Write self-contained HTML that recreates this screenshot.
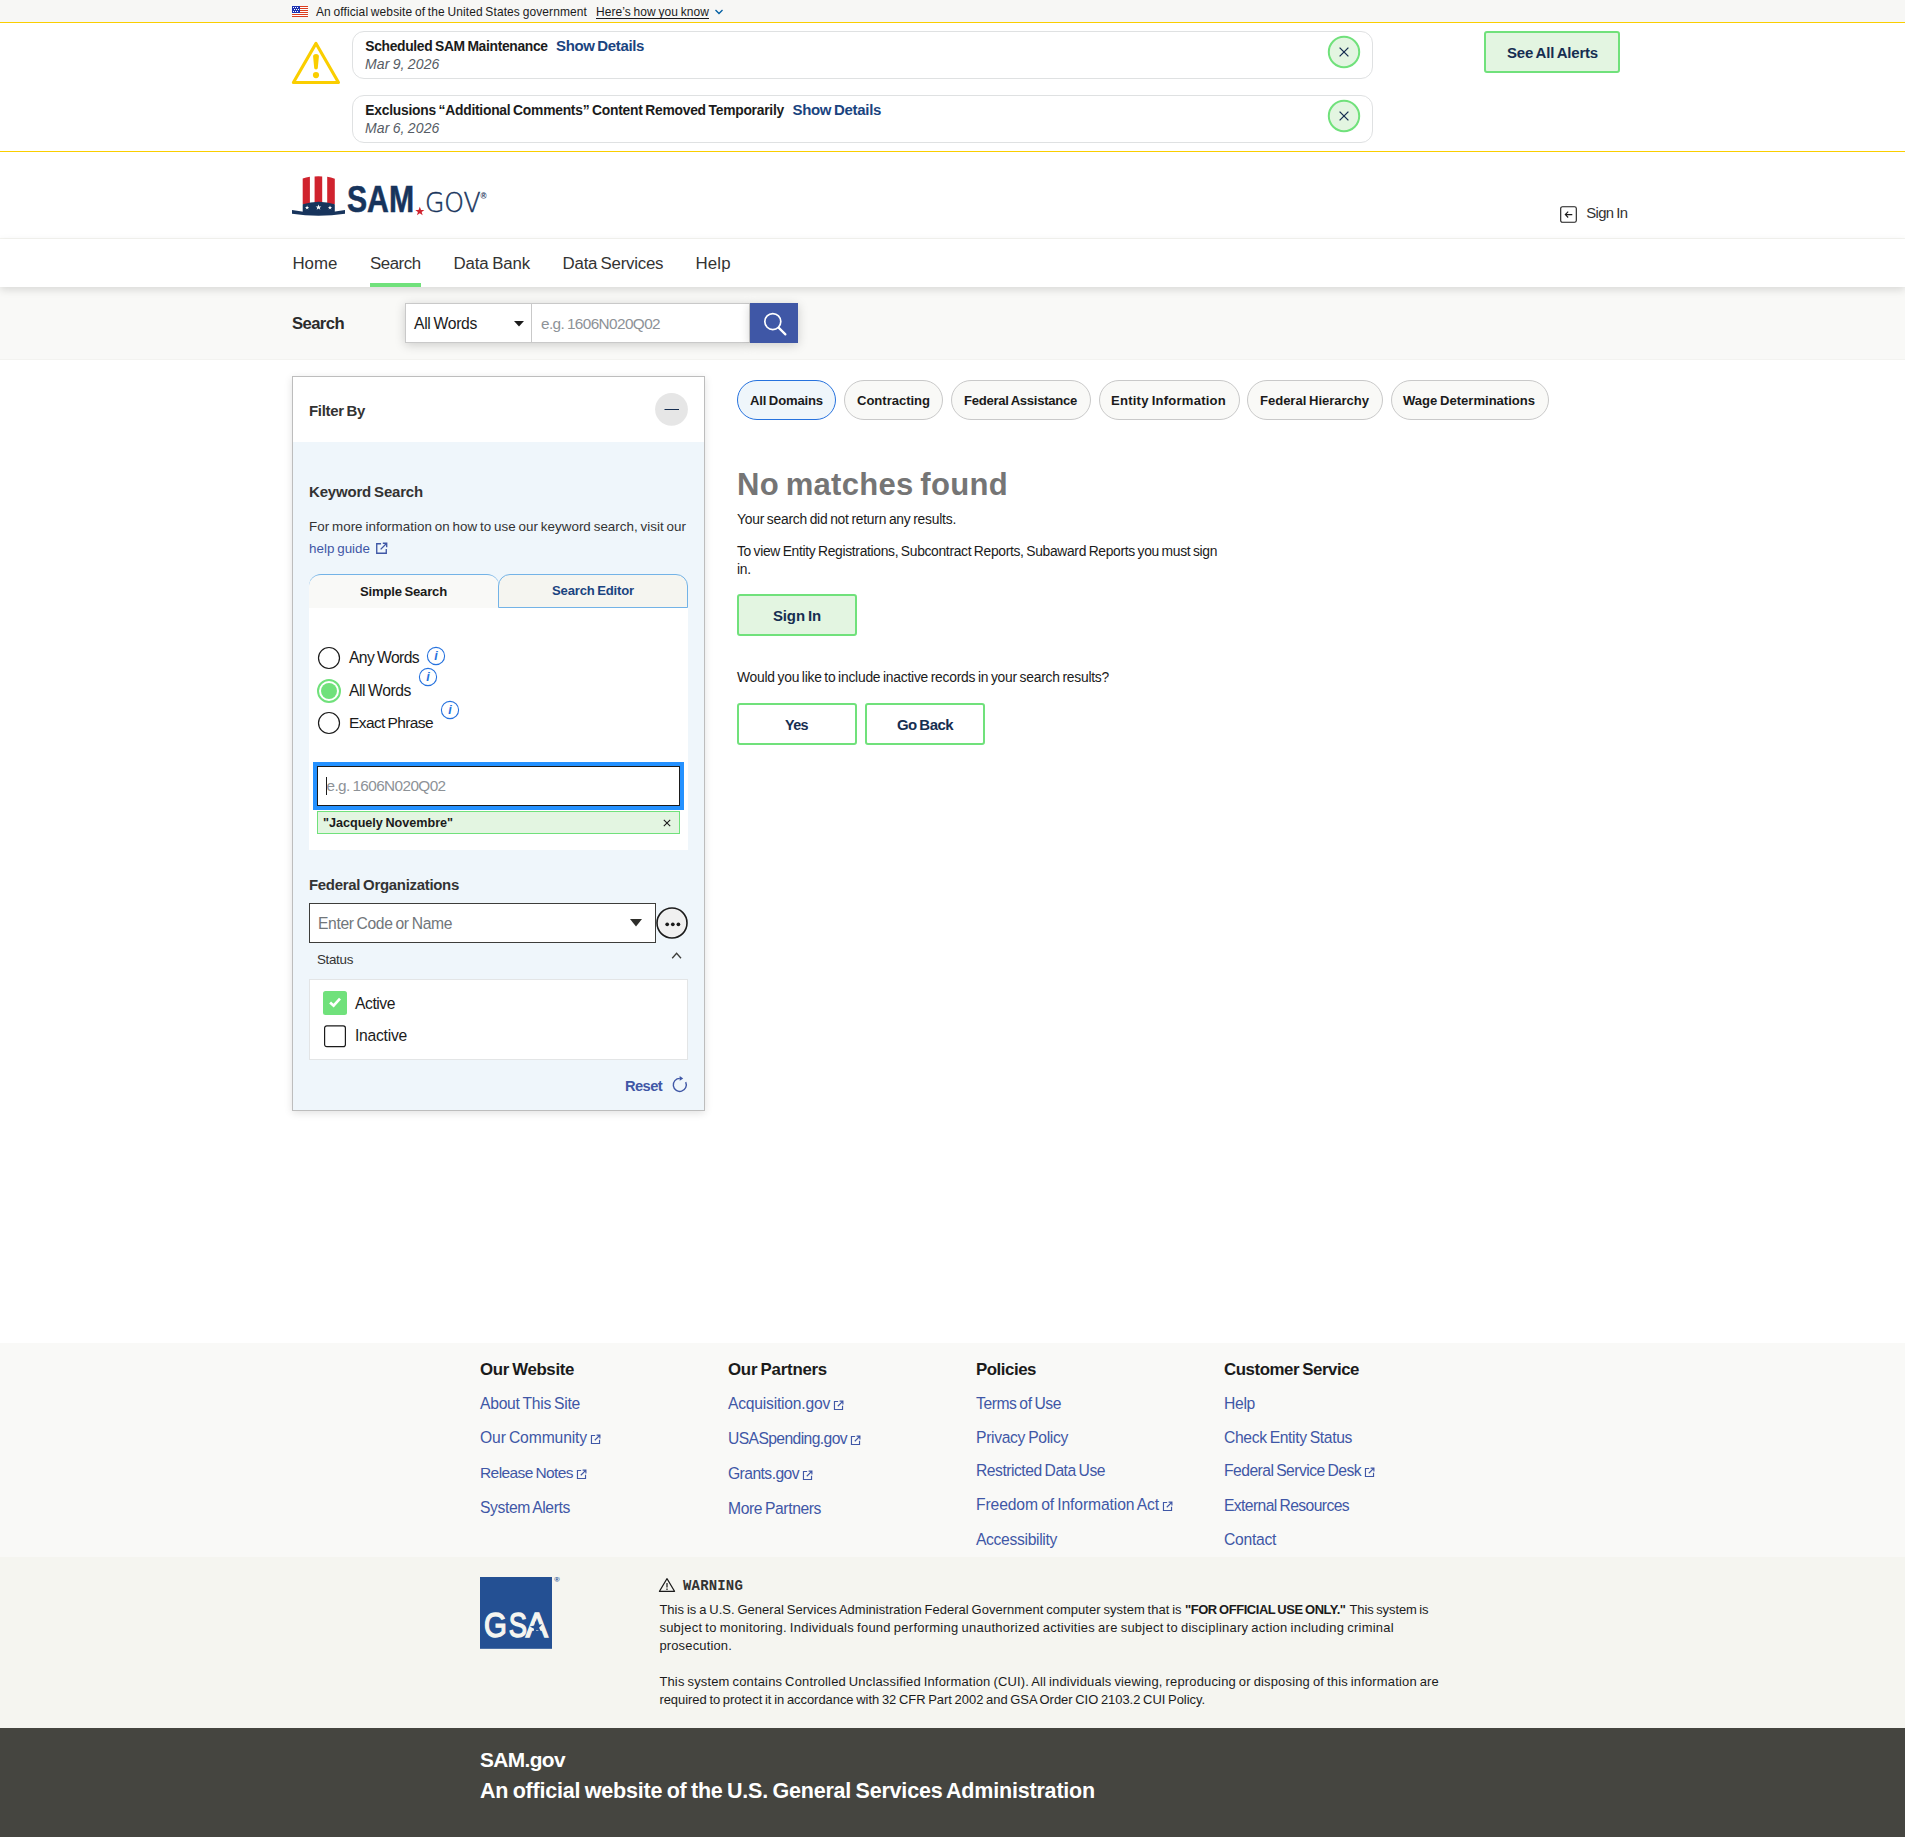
<!DOCTYPE html>
<html lang="en"><head><meta charset="utf-8"><title>SAM.gov | Search</title>
<style>
html,body{margin:0;padding:0;background:#fff;}
body{width:1905px;height:1837px;position:relative;overflow:hidden;font-family:"Liberation Sans",Arial,sans-serif;color:#1b1b1b;}
.b{position:absolute;display:block;}
.t{position:absolute;display:block;white-space:nowrap;line-height:20px;}
</style></head><body>
<div class="b" style="left:0px;top:0px;width:1905px;height:22px;background:#f7f7f5;"></div>
<svg class="b" style="left:292px;top:6px" width="16" height="11" viewBox="0 0 16 11"><rect width="16" height="11" fill="#fff"/><g fill="#db3e1f"><rect y="0" width="16" height="1"/><rect y="2" width="16" height="1"/><rect y="4" width="16" height="1"/><rect y="6" width="16" height="1"/><rect y="8" width="16" height="1"/><rect y="10" width="16" height="1"/></g><rect width="8" height="7" fill="#1e33b1"/><g fill="#fff"><rect x="1" y="1" width="1" height="1"/><rect x="3" y="1" width="1" height="1"/><rect x="5" y="1" width="1" height="1"/><rect x="2" y="3" width="1" height="1"/><rect x="4" y="3" width="1" height="1"/><rect x="6" y="3" width="1" height="1"/><rect x="1" y="5" width="1" height="1"/><rect x="3" y="5" width="1" height="1"/><rect x="5" y="5" width="1" height="1"/></g></svg>
<span class="t" id="t1" style="left:316px;top:2.01px;font-size:11.98px;letter-spacing:0.114px;word-spacing:-0.77px;">An official website of the United States government</span>
<span class="t" id="t2" style="left:596px;top:2.01px;font-size:11.98px;letter-spacing:0.093px;word-spacing:-0.77px;text-decoration:underline;text-underline-offset:1.5px;">Here’s how you know</span>
<svg class="b" style="left:714px;top:8px" width="10" height="8" viewBox="0 0 10 8"><path d="M1.5 2 L5 5.5 L8.5 2" fill="none" stroke="#005ea2" stroke-width="1.3"/></svg>
<div class="b" style="left:0px;top:22px;width:1905px;height:130px;background:#fff;"></div>
<div class="b" style="left:0px;top:21.8px;width:1905px;height:1.2px;background:#face00;"></div>
<div class="b" style="left:0px;top:151px;width:1905px;height:1.2px;background:#face00;"></div>
<svg class="b" style="left:291px;top:40px" width="50" height="46" viewBox="0 0 50 46"><path d="M25 3.4 L47.5 42.5 L2.4 42.5 Z" fill="none" stroke="#face00" stroke-width="3.1" stroke-linejoin="round"/><path d="M22.1 16.6 Q22 14.1 25 14.1 Q28 14.1 27.9 16.6 L26.8 28 Q26.7 29.4 25 29.4 Q23.3 29.4 23.2 28 Z" fill="#face00"/><circle cx="25" cy="35.1" r="3.1" fill="#face00"/></svg>
<div class="b" style="left:352px;top:31px;width:1021px;height:48px;border:1px solid #dfe1e2;border-radius:12px;box-sizing:border-box;background:#fff;"></div>
<span class="t" id="t3" style="left:365.3px;top:36.01px;font-size:13.85px;font-weight:700;letter-spacing:-0.326px;word-spacing:-0.89px;">Scheduled SAM Maintenance</span>
<span class="t" id="t4" style="left:556px;top:36.01px;font-size:14.98px;font-weight:700;color:#1a4480;letter-spacing:-0.351px;word-spacing:-0.96px;">Show Details</span>
<span class="t" id="t5" style="left:365px;top:53.60px;font-size:14.04px;color:#565c65;font-style:italic;letter-spacing:0.129px;word-spacing:-0.90px;">Mar 9, 2026</span>
<svg class="b" style="left:1327px;top:35px" width="34" height="34" viewBox="0 0 34 34"><circle cx="17" cy="17" r="15.2" fill="#e3f5e1" stroke="#70e17b" stroke-width="2"/><path d="M12.6 12.6 L21.4 21.4 M21.4 12.6 L12.6 21.4" stroke="#162e51" stroke-width="1.3"/></svg>
<div class="b" style="left:352px;top:95px;width:1021px;height:48px;border:1px solid #dfe1e2;border-radius:12px;box-sizing:border-box;background:#fff;"></div>
<span class="t" id="t6" style="left:365.3px;top:100.01px;font-size:13.85px;font-weight:700;letter-spacing:-0.251px;word-spacing:-0.89px;">Exclusions “Additional Comments” Content Removed Temporarily</span>
<span class="t" id="t7" style="left:792.5px;top:100.01px;font-size:14.98px;font-weight:700;color:#1a4480;letter-spacing:-0.309px;word-spacing:-0.96px;">Show Details</span>
<span class="t" id="t8" style="left:365px;top:117.60px;font-size:14.04px;color:#565c65;font-style:italic;letter-spacing:0.129px;word-spacing:-0.90px;">Mar 6, 2026</span>
<svg class="b" style="left:1327px;top:99px" width="34" height="34" viewBox="0 0 34 34"><circle cx="17" cy="17" r="15.2" fill="#e3f5e1" stroke="#70e17b" stroke-width="2"/><path d="M12.6 12.6 L21.4 21.4 M21.4 12.6 L12.6 21.4" stroke="#162e51" stroke-width="1.3"/></svg>
<div class="b" style="left:1484px;top:31px;width:136px;height:42px;border:2px solid #70e17b;background:#e3f5e1;border-radius:3px;box-sizing:border-box;"></div>
<span class="t" id="t9" style="left:1507px;top:43.01px;font-size:14.98px;font-weight:700;color:#162e51;letter-spacing:-0.177px;word-spacing:-0.96px;">See All Alerts</span>
<div class="b" style="left:0px;top:152px;width:1905px;height:85px;background:#fff;"></div>
<div class="b" style="left:0px;top:238px;width:1905px;height:1px;background:#f5f5f1;"></div>
<svg class="b" style="left:290px;top:170.7px" width="204" height="50" viewBox="0 0 204 50">
<g fill="#d0232e"><path d="M12.7 7.6 Q16 6.3 19.9 5.8 L19.9 33 L12.7 33 Z"/><path d="M24.6 5.4 Q28.4 5.1 32.2 5.4 L32.2 33 L24.6 33 Z"/><path d="M37.2 5.8 Q41 6.3 44.8 7.8 L44.8 33 L37.2 33 Z"/></g>
<path d="M12.7 33.2 Q28.7 28.2 44.8 33.2 L44.8 42 L12.7 42 Z" fill="#17345c"/>
<path d="M2 39 Q28.5 44.2 55 39 L55 42.8 Q28.5 46.8 2 42.8 Z" fill="#17345c"/>
<g fill="#fff"><path d="M0 -2.3 L0.62 -0.72 L2.3 -0.72 L0.95 0.3 L1.45 1.95 L0 0.95 L-1.45 1.95 L-0.95 0.3 L-2.3 -0.72 L-0.62 -0.72 Z" transform="translate(17.1 36.6) scale(0.92)"/><path d="M0 -2.3 L0.62 -0.72 L2.3 -0.72 L0.95 0.3 L1.45 1.95 L0 0.95 L-1.45 1.95 L-0.95 0.3 L-2.3 -0.72 L-0.62 -0.72 Z" transform="translate(28.5 36.3) scale(1.25)"/><path d="M0 -2.3 L0.62 -0.72 L2.3 -0.72 L0.95 0.3 L1.45 1.95 L0 0.95 L-1.45 1.95 L-0.95 0.3 L-2.3 -0.72 L-0.62 -0.72 Z" transform="translate(40 36.6) scale(0.92)"/></g>
<text x="57" y="41" font-family="'Liberation Sans',sans-serif" font-weight="700" font-size="37.3" fill="#17345c" stroke="#17345c" stroke-width="0.6" textLength="67" lengthAdjust="spacingAndGlyphs">SAM</text>
<path d="M0 -3.9 L1.05 -1.2 L3.9 -1.2 L1.6 0.5 L2.45 3.3 L0 1.6 L-2.45 3.3 L-1.6 0.5 L-3.9 -1.2 L-1.05 -1.2 Z" transform="translate(129.8 40.4) scale(1.17)" fill="#d0232e"/>
<text x="134.9" y="41.2" font-family="'DejaVu Sans Light','DejaVu Sans',sans-serif" font-weight="200" font-size="27" fill="#17345c" stroke="#17345c" stroke-width="0.5" textLength="55.8" lengthAdjust="spacingAndGlyphs">GOV</text>
<text x="190.6" y="28.1" font-family="'Liberation Sans',sans-serif" font-weight="700" font-size="8.2" fill="#17345c">®</text>
</svg>
<svg class="b" style="left:1559px;top:205px" width="20" height="20" viewBox="0 0 20 20"><rect x="1.7" y="1.7" width="15.6" height="15.6" rx="1.8" fill="none" stroke="#1b1b1b" stroke-width="1.1"/><path d="M13.3 9.6 H6.3 M9.2 6.7 L6.3 9.6 L9.2 12.5" fill="none" stroke="#1b1b1b" stroke-width="1.1"/></svg>
<span class="t" id="t10" style="left:1586.2px;top:203.01px;font-size:14.86px;color:#333;letter-spacing:-0.627px;word-spacing:-0.78px;">Sign In</span>
<div class="b" style="left:0px;top:239px;width:1905px;height:48px;background:#fff;box-shadow:0 3px 8px rgba(0,0,0,.13);z-index:2;"></div>
<span class="t" id="t11" style="left:292.4px;top:254.00px;font-size:16.85px;color:#333;letter-spacing:0.016px;z-index:3;">Home</span>
<span class="t" id="t12" style="left:370px;top:254.00px;font-size:16.85px;color:#333;letter-spacing:-0.464px;z-index:3;">Search</span>
<span class="t" id="t13" style="left:453.4px;top:254.00px;font-size:16.85px;color:#333;letter-spacing:-0.086px;word-spacing:-1.08px;z-index:3;">Data Bank</span>
<span class="t" id="t14" style="left:562.6px;top:254.00px;font-size:16.85px;color:#333;letter-spacing:-0.245px;word-spacing:-1.08px;z-index:3;">Data Services</span>
<span class="t" id="t15" style="left:695.6px;top:254.00px;font-size:16.85px;color:#333;letter-spacing:0.086px;z-index:3;">Help</span>
<div class="b" style="left:370px;top:283px;width:51px;height:4px;background:#70e17b;z-index:3;"></div>
<div class="b" style="left:0px;top:287px;width:1905px;height:73px;background:#f9f9f7;border-bottom:1px solid #f3f3f0;box-sizing:border-box;"></div>
<span class="t" id="t16" style="left:292px;top:314.01px;font-size:16.67px;font-weight:700;color:#2b2b2b;letter-spacing:-0.594px;">Search</span>
<div class="b" style="left:405px;top:303px;width:345px;height:40px;background:#fff;border:1px solid #c9c9c9;box-sizing:border-box;box-shadow:0 2px 10px rgba(0,0,0,.18);"></div>
<div class="b" style="left:530.5px;top:303px;width:1px;height:40px;background:#c9c9c9;"></div>
<span class="t" id="t17" style="left:414px;top:313.51px;font-size:15.68px;letter-spacing:-0.307px;word-spacing:-1.01px;">All Words</span>
<svg class="b" style="left:513px;top:320px" width="12" height="8" viewBox="0 0 12 8"><path d="M1 1 H11 L6 6.6 Z" fill="#1b1b1b"/></svg>
<span class="t" id="t18" style="left:541px;top:313.51px;font-size:15.34px;color:#8d9297;letter-spacing:-0.602px;word-spacing:-0.91px;">e.g. 1606N020Q02</span>
<div class="b" style="left:750px;top:302.5px;width:48px;height:40.5px;background:#3f57a6;box-shadow:0 2px 10px rgba(0,0,0,.18);"></div>
<svg class="b" style="left:762px;top:311px" width="26" height="26" viewBox="0 0 26 26"><circle cx="10.8" cy="10.6" r="8" fill="none" stroke="#fff" stroke-width="1.7"/><path d="M16.6 16.6 L23.4 23.4" stroke="#fff" stroke-width="2.2" stroke-linecap="round"/></svg>
<div class="b" style="left:292px;top:376px;width:413px;height:734.5px;background:#eff6fb;border:1px solid #bdbdbd;box-sizing:border-box;box-shadow:0 2px 8px rgba(0,0,0,.12);"></div>
<div class="b" style="left:293px;top:377px;width:411px;height:65px;background:#fff;"></div>
<span class="t" id="t19" style="left:309px;top:401.01px;font-size:14.98px;font-weight:700;color:#333;letter-spacing:-0.326px;word-spacing:-0.96px;">Filter By</span>
<svg class="b" style="left:654px;top:392px" width="36" height="36" viewBox="0 0 36 36"><circle cx="17.5" cy="17.3" r="16.4" fill="#e6e6e6"/><path d="M10.5 17.5 H25" stroke="#162e51" stroke-width="1"/></svg>
<span class="t" id="t20" style="left:309px;top:482.01px;font-size:14.98px;font-weight:700;color:#333;letter-spacing:-0.168px;word-spacing:-0.96px;">Keyword Search</span>
<span class="t" id="t21" style="left:309px;top:517.00px;font-size:13.38px;color:#333;letter-spacing:0.022px;word-spacing:-0.86px;">For more information on how to use our keyword search, visit our</span>
<span class="t" id="t22" style="left:309px;top:539.00px;font-size:13.38px;color:#3f57a6;letter-spacing:0.013px;word-spacing:-0.86px;">help guide</span>
<svg class="b" style="left:375px;top:542px" width="13" height="13" viewBox="0 0 12 12"><path d="M5.6 1.6 H1.6 V10.4 H10.4 V6.4" fill="none" stroke="#3f57a6" stroke-width="1.25"/><path d="M7.2 1.2 H10.8 V4.8 M10.6 1.4 L5.2 6.8" fill="none" stroke="#3f57a6" stroke-width="1.25"/></svg>
<div class="b" style="left:309px;top:607px;width:379px;height:243px;background:#fff;"></div>
<div class="b" style="left:309px;top:574px;width:190px;height:34px;background:#f9f9f7;border-top:1px solid #73b3e7;border-radius:12px 12px 0 0;box-sizing:border-box;"></div>
<div class="b" style="left:309px;top:600px;width:189px;height:8px;background:#f9f9f7;"></div>
<div class="b" style="left:498px;top:574px;width:190px;height:33.5px;background:#f5f5f0;border:1px solid #73b3e7;border-radius:12px 12px 0 0;box-sizing:border-box;"></div>
<span class="t" id="t23" style="left:360px;top:582.01px;font-size:13.1px;font-weight:700;letter-spacing:-0.185px;word-spacing:-0.84px;">Simple Search</span>
<span class="t" id="t24" style="left:552px;top:581.01px;font-size:13.1px;font-weight:700;color:#1a4480;letter-spacing:-0.177px;word-spacing:-0.84px;">Search Editor</span>
<svg class="b" style="left:316px;top:644.5px" width="26" height="26" viewBox="0 0 26 26"><circle cx="13" cy="13" r="10.5" fill="#fff" stroke="#1b1b1b" stroke-width="1.2"/></svg>
<span class="t" id="t25" style="left:349px;top:648.01px;font-size:15.68px;letter-spacing:-0.595px;word-spacing:-1.01px;">Any Words</span>
<svg class="b" style="left:426px;top:646px" width="20" height="20" viewBox="0 0 20 20"><circle cx="10" cy="10" r="8.6" fill="#fff" stroke="#2672de" stroke-width="1.1"/><text x="10" y="14.2" text-anchor="middle" font-family="'Liberation Sans',sans-serif" font-style="italic" font-weight="700" font-size="12.5" fill="#2672de">i</text></svg>
<svg class="b" style="left:316px;top:677.5px" width="26" height="26" viewBox="0 0 26 26"><circle cx="13" cy="13" r="11" fill="#fff" stroke="#70e17b" stroke-width="2"/><circle cx="13" cy="13" r="8" fill="#70e17b"/></svg>
<span class="t" id="t26" style="left:349px;top:681.01px;font-size:15.68px;letter-spacing:-0.418px;word-spacing:-1.01px;">All Words</span>
<svg class="b" style="left:418px;top:667px" width="20" height="20" viewBox="0 0 20 20"><circle cx="10" cy="10" r="8.6" fill="#fff" stroke="#2672de" stroke-width="1.1"/><text x="10" y="14.2" text-anchor="middle" font-family="'Liberation Sans',sans-serif" font-style="italic" font-weight="700" font-size="12.5" fill="#2672de">i</text></svg>
<svg class="b" style="left:316px;top:709.9px" width="26" height="26" viewBox="0 0 26 26"><circle cx="13" cy="13" r="10.5" fill="#fff" stroke="#1b1b1b" stroke-width="1.2"/></svg>
<span class="t" id="t27" style="left:349px;top:713.01px;font-size:15.51px;letter-spacing:-0.602px;word-spacing:-0.96px;">Exact Phrase</span>
<svg class="b" style="left:440px;top:700px" width="20" height="20" viewBox="0 0 20 20"><circle cx="10" cy="10" r="8.6" fill="#fff" stroke="#2672de" stroke-width="1.1"/><text x="10" y="14.2" text-anchor="middle" font-family="'Liberation Sans',sans-serif" font-style="italic" font-weight="700" font-size="12.5" fill="#2672de">i</text></svg>
<div class="b" style="left:313px;top:762px;width:371px;height:48px;background:#2491ff;"></div>
<div class="b" style="left:317px;top:766px;width:363px;height:40px;background:#fff;border:1px solid #1b1b1b;box-sizing:border-box;"></div>
<div class="b" style="left:326px;top:777px;width:1px;height:18px;background:#1b1b1b;"></div>
<span class="t" id="t28" style="left:326.5px;top:776.01px;font-size:15.34px;color:#8d9297;letter-spacing:-0.602px;word-spacing:-0.91px;">e.g. 1606N020Q02</span>
<div class="b" style="left:317px;top:811px;width:363px;height:23px;background:#e3f5e1;border:1px solid #70e17b;box-sizing:border-box;"></div>
<span class="t" id="t29" style="left:323px;top:813.01px;font-size:12.64px;font-weight:700;letter-spacing:-0.024px;word-spacing:-0.81px;">"Jacquely Novembre"</span>
<svg class="b" style="left:662px;top:818px" width="10" height="10" viewBox="0 0 10 10"><path d="M1.8 1.8 L8.2 8.2 M8.2 1.8 L1.8 8.2" stroke="#1b1b1b" stroke-width="1.1"/></svg>
<span class="t" id="t30" style="left:309px;top:874.51px;font-size:14.98px;font-weight:700;color:#333;letter-spacing:-0.298px;word-spacing:-0.96px;">Federal Organizations</span>
<div class="b" style="left:309px;top:903px;width:347px;height:39.5px;background:#fff;border:1px solid #3d3d3a;box-sizing:border-box;"></div>
<span class="t" id="t31" style="left:318px;top:913.51px;font-size:15.68px;color:#71767a;letter-spacing:-0.372px;word-spacing:-1.01px;">Enter Code or Name</span>
<svg class="b" style="left:628.8px;top:918px" width="14" height="10" viewBox="0 0 14 10"><path d="M1 1 H13 L7 8.4 Z" fill="#2e2e2a"/></svg>
<svg class="b" style="left:655px;top:906px" width="34" height="34" viewBox="0 0 34 34"><circle cx="17" cy="17" r="15" fill="#f0f0f0" stroke="#1b1b1b" stroke-width="1.6"/><circle cx="12.2" cy="18.3" r="1.85" fill="#1b1b1b"/><circle cx="17.8" cy="18.3" r="1.85" fill="#1b1b1b"/><circle cx="23.4" cy="18.3" r="1.85" fill="#1b1b1b"/></svg>
<span class="t" id="t32" style="left:317px;top:950.00px;font-size:13.38px;color:#333;letter-spacing:-0.320px;">Status</span>
<svg class="b" style="left:670px;top:950px" width="13" height="10" viewBox="0 0 13 10"><path d="M2.2 8.2 L6.6 3.2 L11 8.2" fill="none" stroke="#3d3d3a" stroke-width="1.3"/></svg>
<div class="b" style="left:309px;top:979px;width:379px;height:81px;background:#fff;border:1px solid #e3e5e6;box-sizing:border-box;"></div>
<svg class="b" style="left:323px;top:991px" width="24" height="24" viewBox="0 0 24 24"><rect x="0" y="0" width="24" height="24" rx="2.5" fill="#70e17b"/><path d="M7.1 11.4 L10.6 14.7 L17 7.7" fill="none" stroke="#fff" stroke-width="2.7"/></svg>
<span class="t" id="t33" style="left:355px;top:994.01px;font-size:15.68px;letter-spacing:-0.448px;">Active</span>
<svg class="b" style="left:323px;top:1024px" width="24" height="24" viewBox="0 0 24 24"><rect x="1.6" y="1.8" width="20.8" height="20.8" rx="2.2" fill="#fff" stroke="#1b1b1b" stroke-width="1.2"/></svg>
<span class="t" id="t34" style="left:355px;top:1026.01px;font-size:15.68px;letter-spacing:-0.252px;">Inactive</span>
<span class="t" id="t35" style="left:625px;top:1075.50px;font-size:14.69px;font-weight:700;color:#3f57a6;letter-spacing:-0.603px;">Reset</span>
<svg class="b" style="left:671px;top:1075px" width="20" height="20" viewBox="0 0 20 20"><path d="M8.8 3.4 A6.5 6.5 0 1 0 14.69 7.15" fill="none" stroke="#3f57a6" stroke-width="1.4"/><path d="M8.7 1.1 L12.2 3.5 L8.7 5.8 Z" fill="#3f57a6"/></svg>
<div class="b" style="left:737px;top:380px;width:99px;height:39.5px;background:#eff6fb;border:1px solid #2672de;border-radius:20px;box-sizing:border-box;"></div>
<span class="t" id="t36" style="left:750px;top:391.01px;font-size:13.1px;font-weight:700;letter-spacing:-0.167px;word-spacing:-0.84px;">All Domains</span>
<div class="b" style="left:844px;top:380px;width:99px;height:39.5px;background:#f9f9f7;border:1px solid #c9c9c9;border-radius:20px;box-sizing:border-box;"></div>
<span class="t" id="t37" style="left:857px;top:391.01px;font-size:13.1px;font-weight:700;letter-spacing:-0.043px;">Contracting</span>
<div class="b" style="left:951px;top:380px;width:140px;height:39.5px;background:#f9f9f7;border:1px solid #c9c9c9;border-radius:20px;box-sizing:border-box;"></div>
<span class="t" id="t38" style="left:964px;top:391.01px;font-size:13.1px;font-weight:700;letter-spacing:-0.280px;word-spacing:-0.84px;">Federal Assistance</span>
<div class="b" style="left:1099px;top:380px;width:141px;height:39.5px;background:#f9f9f7;border:1px solid #c9c9c9;border-radius:20px;box-sizing:border-box;"></div>
<span class="t" id="t39" style="left:1111px;top:391.01px;font-size:13.1px;font-weight:700;letter-spacing:0.212px;word-spacing:-0.84px;">Entity Information</span>
<div class="b" style="left:1247px;top:380px;width:136px;height:39.5px;background:#f9f9f7;border:1px solid #c9c9c9;border-radius:20px;box-sizing:border-box;"></div>
<span class="t" id="t40" style="left:1260px;top:391.01px;font-size:13.1px;font-weight:700;letter-spacing:-0.047px;word-spacing:-0.84px;">Federal Hierarchy</span>
<div class="b" style="left:1391px;top:380px;width:158px;height:39.5px;background:#f9f9f7;border:1px solid #c9c9c9;border-radius:20px;box-sizing:border-box;"></div>
<span class="t" id="t41" style="left:1403px;top:391.01px;font-size:13.1px;font-weight:700;letter-spacing:-0.029px;word-spacing:-0.84px;">Wage Determinations</span>
<span class="t" id="t42" style="left:737px;top:475.01px;font-size:31.04px;font-weight:700;color:#757575;letter-spacing:0.299px;word-spacing:-2.23px;">No matches found</span>
<span class="t" id="t43" style="left:737px;top:508.51px;font-size:13.85px;letter-spacing:-0.233px;word-spacing:-0.89px;">Your search did not return any results.</span>
<span class="t" id="t44" style="left:737px;top:541.01px;font-size:13.85px;letter-spacing:-0.319px;word-spacing:-0.89px;">To view Entity Registrations, Subcontract Reports, Subaward Reports you must sign</span>
<span class="t" id="t45" style="left:737px;top:559.01px;font-size:13.85px;letter-spacing:-0.208px;">in.</span>
<div class="b" style="left:737px;top:594px;width:120px;height:41.5px;border:2px solid #70e17b;background:#e3f5e1;border-radius:3px;box-sizing:border-box;"></div>
<span class="t" id="t46" style="left:773px;top:605.51px;font-size:14.98px;font-weight:700;color:#162e51;letter-spacing:-0.134px;word-spacing:-0.96px;">Sign In</span>
<span class="t" id="t47" style="left:737px;top:667.01px;font-size:13.85px;letter-spacing:-0.241px;word-spacing:-0.89px;">Would you like to include inactive records in your search results?</span>
<div class="b" style="left:737px;top:703px;width:120px;height:41.5px;border:2px solid #70e17b;background:#fff;border-radius:3px;box-sizing:border-box;"></div>
<span class="t" id="t48" style="left:785px;top:714.51px;font-size:14.39px;font-weight:700;color:#162e51;letter-spacing:-0.599px;">Yes</span>
<div class="b" style="left:865px;top:703px;width:120px;height:41.5px;border:2px solid #70e17b;background:#fff;border-radius:3px;box-sizing:border-box;"></div>
<span class="t" id="t49" style="left:897px;top:714.51px;font-size:14.98px;font-weight:700;color:#162e51;letter-spacing:-0.540px;word-spacing:-0.96px;">Go Back</span>
<div class="b" style="left:0px;top:1343px;width:1905px;height:214px;background:#f9f9f7;"></div>
<div class="b" style="left:0px;top:1557px;width:1905px;height:171px;background:#f5f5f0;"></div>
<div class="b" style="left:0px;top:1728px;width:1905px;height:109px;background:#454540;"></div>
<span class="t" id="t50" style="left:480px;top:1360.00px;font-size:16.85px;font-weight:700;letter-spacing:-0.348px;word-spacing:-1.08px;">Our Website</span>
<span class="t" id="t51" style="left:728px;top:1360.00px;font-size:16.85px;font-weight:700;letter-spacing:-0.241px;word-spacing:-1.08px;">Our Partners</span>
<span class="t" id="t52" style="left:976px;top:1360.00px;font-size:16.85px;font-weight:700;letter-spacing:-0.459px;">Policies</span>
<span class="t" id="t53" style="left:1224px;top:1360.00px;font-size:16.85px;font-weight:700;letter-spacing:-0.448px;word-spacing:-1.08px;">Customer Service</span>
<span class="t" id="t54" style="left:480px;top:1394.01px;font-size:15.68px;color:#3f57a6;letter-spacing:-0.265px;word-spacing:-1.01px;">About This Site</span>
<span class="t" id="t55" style="left:480px;top:1428.01px;font-size:15.68px;color:#3f57a6;letter-spacing:-0.133px;word-spacing:-1.01px;">Our Community</span>
<svg class="b" style="left:590px;top:1433.5px" width="11" height="11" viewBox="0 0 12 12"><path d="M5.6 1.6 H1.6 V10.4 H10.4 V6.4" fill="none" stroke="#3f57a6" stroke-width="1.25"/><path d="M7.2 1.2 H10.8 V4.8 M10.6 1.4 L5.2 6.8" fill="none" stroke="#3f57a6" stroke-width="1.25"/></svg>
<span class="t" id="t56" style="left:480px;top:1463.01px;font-size:15.52px;color:#3f57a6;letter-spacing:-0.601px;word-spacing:-0.96px;">Release Notes</span>
<svg class="b" style="left:576px;top:1468.5px" width="11" height="11" viewBox="0 0 12 12"><path d="M5.6 1.6 H1.6 V10.4 H10.4 V6.4" fill="none" stroke="#3f57a6" stroke-width="1.25"/><path d="M7.2 1.2 H10.8 V4.8 M10.6 1.4 L5.2 6.8" fill="none" stroke="#3f57a6" stroke-width="1.25"/></svg>
<span class="t" id="t57" style="left:480px;top:1498.01px;font-size:15.68px;color:#3f57a6;letter-spacing:-0.369px;word-spacing:-1.01px;">System Alerts</span>
<span class="t" id="t58" style="left:728px;top:1394.01px;font-size:15.68px;color:#3f57a6;letter-spacing:-0.228px;">Acquisition.gov</span>
<svg class="b" style="left:833px;top:1399.5px" width="11" height="11" viewBox="0 0 12 12"><path d="M5.6 1.6 H1.6 V10.4 H10.4 V6.4" fill="none" stroke="#3f57a6" stroke-width="1.25"/><path d="M7.2 1.2 H10.8 V4.8 M10.6 1.4 L5.2 6.8" fill="none" stroke="#3f57a6" stroke-width="1.25"/></svg>
<span class="t" id="t59" style="left:728px;top:1429.01px;font-size:15.67px;color:#3f57a6;letter-spacing:-0.597px;">USASpending.gov</span>
<svg class="b" style="left:850px;top:1434.5px" width="11" height="11" viewBox="0 0 12 12"><path d="M5.6 1.6 H1.6 V10.4 H10.4 V6.4" fill="none" stroke="#3f57a6" stroke-width="1.25"/><path d="M7.2 1.2 H10.8 V4.8 M10.6 1.4 L5.2 6.8" fill="none" stroke="#3f57a6" stroke-width="1.25"/></svg>
<span class="t" id="t60" style="left:728px;top:1464.01px;font-size:15.68px;color:#3f57a6;letter-spacing:-0.566px;">Grants.gov</span>
<svg class="b" style="left:802px;top:1469.5px" width="11" height="11" viewBox="0 0 12 12"><path d="M5.6 1.6 H1.6 V10.4 H10.4 V6.4" fill="none" stroke="#3f57a6" stroke-width="1.25"/><path d="M7.2 1.2 H10.8 V4.8 M10.6 1.4 L5.2 6.8" fill="none" stroke="#3f57a6" stroke-width="1.25"/></svg>
<span class="t" id="t61" style="left:728px;top:1499.01px;font-size:15.68px;color:#3f57a6;letter-spacing:-0.407px;word-spacing:-1.01px;">More Partners</span>
<span class="t" id="t62" style="left:976px;top:1394.01px;font-size:15.68px;color:#3f57a6;letter-spacing:-0.441px;word-spacing:-1.01px;">Terms of Use</span>
<span class="t" id="t63" style="left:976px;top:1428.01px;font-size:15.68px;color:#3f57a6;letter-spacing:-0.324px;word-spacing:-1.01px;">Privacy Policy</span>
<span class="t" id="t64" style="left:976px;top:1461.01px;font-size:15.68px;color:#3f57a6;letter-spacing:-0.485px;word-spacing:-1.01px;">Restricted Data Use</span>
<span class="t" id="t65" style="left:976px;top:1495.01px;font-size:15.68px;color:#3f57a6;letter-spacing:-0.115px;word-spacing:-1.01px;">Freedom of Information Act</span>
<svg class="b" style="left:1162px;top:1500.5px" width="11" height="11" viewBox="0 0 12 12"><path d="M5.6 1.6 H1.6 V10.4 H10.4 V6.4" fill="none" stroke="#3f57a6" stroke-width="1.25"/><path d="M7.2 1.2 H10.8 V4.8 M10.6 1.4 L5.2 6.8" fill="none" stroke="#3f57a6" stroke-width="1.25"/></svg>
<span class="t" id="t66" style="left:976px;top:1530.01px;font-size:15.68px;color:#3f57a6;letter-spacing:-0.335px;">Accessibility</span>
<span class="t" id="t67" style="left:1224px;top:1394.01px;font-size:15.68px;color:#3f57a6;letter-spacing:-0.309px;">Help</span>
<span class="t" id="t68" style="left:1224px;top:1428.01px;font-size:15.68px;color:#3f57a6;letter-spacing:-0.355px;word-spacing:-1.01px;">Check Entity Status</span>
<span class="t" id="t69" style="left:1224px;top:1461.01px;font-size:15.68px;color:#3f57a6;letter-spacing:-0.540px;word-spacing:-1.01px;">Federal Service Desk</span>
<svg class="b" style="left:1364px;top:1466.5px" width="11" height="11" viewBox="0 0 12 12"><path d="M5.6 1.6 H1.6 V10.4 H10.4 V6.4" fill="none" stroke="#3f57a6" stroke-width="1.25"/><path d="M7.2 1.2 H10.8 V4.8 M10.6 1.4 L5.2 6.8" fill="none" stroke="#3f57a6" stroke-width="1.25"/></svg>
<span class="t" id="t70" style="left:1224px;top:1496.01px;font-size:15.68px;color:#3f57a6;letter-spacing:-0.597px;word-spacing:-1.01px;">External Resources</span>
<span class="t" id="t71" style="left:1224px;top:1530.01px;font-size:15.68px;color:#3f57a6;letter-spacing:-0.288px;">Contact</span>
<svg class="b" style="left:480px;top:1577px" width="84" height="74" viewBox="0 0 84 74"><rect x="0" y="0" width="72" height="71.8" fill="#245093"/>
<g font-family="'Liberation Sans',sans-serif" font-size="35" fill="#f5f5f0" stroke="#f5f5f0" stroke-width="1.4"><text transform="translate(4 60.4) scale(0.84 1)">G</text><text transform="translate(28.7 60.4) scale(0.78 1)">S</text><text transform="translate(45.8 60.4) scale(0.95 1)">A</text></g>
<path d="M55.25 43.90 L57.58 47.97 L62.23 47.30 L59.07 50.78 L61.15 54.98 L56.87 53.06 L53.51 56.33 L54.02 51.67 L49.86 49.48 L54.46 48.52 Z" fill="#245093"/>
<text x="74.2" y="5.4" font-family="'Liberation Sans',sans-serif" font-weight="700" font-size="7.4" fill="#245093">®</text></svg>
<svg class="b" style="left:658px;top:1577px" width="18" height="16" viewBox="0 0 18 16"><path d="M9 1.6 L16.6 14.4 H1.4 Z" fill="none" stroke="#1b1b1b" stroke-width="1.1" stroke-linejoin="round"/><path d="M9 6 V10.4 M9 11.6 V13" stroke="#1b1b1b" stroke-width="1.2"/></svg>
<span class="t" id="t72" style="left:683px;top:1576.00px;font-size:14.0px;font-weight:700;color:#333;font-family:'Liberation Mono','DejaVu Sans Mono',monospace;letter-spacing:0.170px;">WARNING</span>
<span class="t" id="t73" style="left:659.4px;top:1600.01px;font-size:12.96px;letter-spacing:0.051px;word-spacing:-0.83px;white-space:pre;">This is a U.S. General Services Administration Federal Government computer system that is </span>
<span class="t" id="t74" style="left:1185px;top:1600.01px;font-size:12.96px;font-weight:700;letter-spacing:-0.438px;word-spacing:-0.83px;">"FOR OFFICIAL USE ONLY."</span>
<span class="t" id="t75" style="left:1349.5px;top:1600.01px;font-size:12.96px;letter-spacing:-0.099px;word-spacing:-0.83px;">This system is</span>
<span class="t" id="t76" style="left:659.4px;top:1618.01px;font-size:12.96px;letter-spacing:0.270px;word-spacing:-0.83px;">subject to monitoring. Individuals found performing unauthorized activities are subject to disciplinary action including criminal</span>
<span class="t" id="t77" style="left:659.4px;top:1636.01px;font-size:12.96px;letter-spacing:0.169px;">prosecution.</span>
<span class="t" id="t78" style="left:659.4px;top:1672.01px;font-size:12.96px;letter-spacing:0.175px;word-spacing:-0.83px;">This system contains Controlled Unclassified Information (CUI). All individuals viewing, reproducing or disposing of this information are</span>
<span class="t" id="t79" style="left:659.4px;top:1690.01px;font-size:12.96px;letter-spacing:-0.032px;word-spacing:-0.83px;">required to protect it in accordance with 32 CFR Part 2002 and GSA Order CIO 2103.2 CUI Policy.</span>
<span class="t" id="t80" style="left:480px;top:1750.01px;font-size:20.86px;font-weight:700;color:#fff;letter-spacing:-0.605px;">SAM.gov</span>
<span class="t" id="t81" style="left:480px;top:1781.01px;font-size:21.53px;font-weight:700;color:#fff;letter-spacing:-0.202px;word-spacing:-1.39px;">An official website of the U.S. General Services Administration</span>
</body></html>
